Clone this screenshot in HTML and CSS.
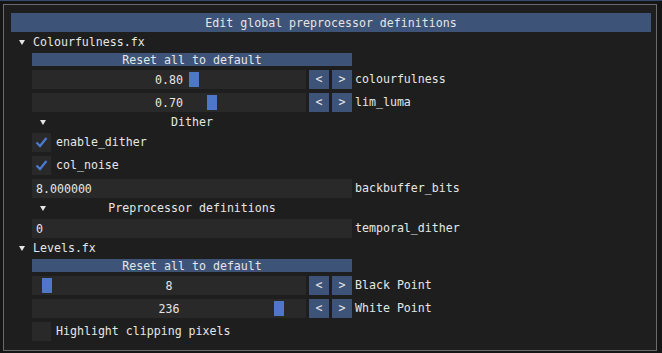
FILE: index.html
```html
<!DOCTYPE html>
<html>
<head>
<meta charset="utf-8" />
<title>Edit global preprocessor definitions</title>
<link rel="stylesheet" href="styles.css">
</head>
<body>
<div class="strip"></div>
<div class="window">
	<div class="header">Edit global preprocessor definitions</div>

	<div class="node"><span class="arrow"></span>Colourfulness.fx</div>
	<div class="group">
		<div class="reset">Reset all to default</div>
		<div class="row">
			<div class="slider"><span class="val">0.80</span><span class="grab" style="left:157px"></span></div>
			<span class="btn">&lt;</span><span class="btn">&gt;</span>
			<span class="label">colourfulness</span>
		</div>
		<div class="row">
			<div class="slider"><span class="val">0.70</span><span class="grab" style="left:175px"></span></div>
			<span class="btn">&lt;</span><span class="btn">&gt;</span>
			<span class="label">lim_luma</span>
		</div>
		<div class="subnode"><span class="arrow"></span><span class="title">Dither</span></div>
		<div class="check"><span class="box"><svg width="19" height="19" viewBox="0 0 19 19"><path d="M4.5 9.5 L8 13 L14.5 5" fill="none" stroke="#4c7bd1" stroke-width="2.2"/></svg></span>enable_dither</div>
		<div class="check"><span class="box"><svg width="19" height="19" viewBox="0 0 19 19"><path d="M4.5 9.5 L8 13 L14.5 5" fill="none" stroke="#4c7bd1" stroke-width="2.2"/></svg></span>col_noise</div>
		<div class="row">
			<div class="input">8.000000</div>
			<span class="label">backbuffer_bits</span>
		</div>
		<div class="subnode"><span class="arrow"></span><span class="title">Preprocessor definitions</span></div>
		<div class="row">
			<div class="input">0</div>
			<span class="label">temporal_dither</span>
		</div>
	</div>

	<div class="node"><span class="arrow"></span>Levels.fx</div>
	<div class="group">
		<div class="reset">Reset all to default</div>
		<div class="row">
			<div class="slider"><span class="val">8</span><span class="grab" style="left:10px"></span></div>
			<span class="btn">&lt;</span><span class="btn">&gt;</span>
			<span class="label">Black Point</span>
		</div>
		<div class="row">
			<div class="slider"><span class="val">236</span><span class="grab" style="left:242px"></span></div>
			<span class="btn">&lt;</span><span class="btn">&gt;</span>
			<span class="label">White Point</span>
		</div>
		<div class="check"><span class="box"></span>Highlight clipping pixels</div>
	</div>
</div>
</body>
</html>
```

FILE: styles.css
```css
html,body{margin:0;padding:0;}
body{background:#151515;color:#e6e6e6;font:11.6px/13px "DejaVu Sans Mono","Liberation Mono",monospace;width:662px;height:353px;overflow:hidden;}
.strip{height:1px;background:#34496b;}
.window{margin:3px 0 0 3px;width:640px;height:337px;padding:8px 5px 0 7px;border:1px solid #6a6a6a;background:#1e1e1e;display:flex;flex-direction:column;gap:4px;}
.header{height:19px;line-height:20px;text-align:center;background:#3d5378;}
.node{height:13px;display:flex;align-items:center;}
.arrow{width:0;height:0;border-left:3px solid transparent;border-right:3px solid transparent;border-top:5px solid #e6e6e6;margin:0 8px 0 8px;}
.group{margin-left:21px;width:320px;display:flex;flex-direction:column;gap:4px;}
.reset{height:13px;line-height:14px;text-align:center;background:#3d5378;}
.row{height:19px;display:flex;align-items:center;gap:3px;}
.slider{position:relative;flex:none;width:274px;height:19px;line-height:20px;background:#292929;text-align:center;}
.grab{position:absolute;top:2px;width:10px;height:15px;background:#4e77c9;}
.btn{flex:none;width:20px;height:19px;line-height:19px;text-align:center;background:#3d5378;}
.label{flex:none;white-space:nowrap;}
.input{flex:none;width:316px;height:19px;line-height:20px;padding-left:4px;background:#292929;}
.subnode{position:relative;height:13px;display:flex;align-items:center;}
.subnode .title{position:absolute;left:0;right:0;text-align:center;}
.check{height:19px;display:flex;align-items:center;gap:5px;}
.box{flex:none;width:19px;height:19px;background:#292929;display:block;}
.box svg{display:block;}
```
